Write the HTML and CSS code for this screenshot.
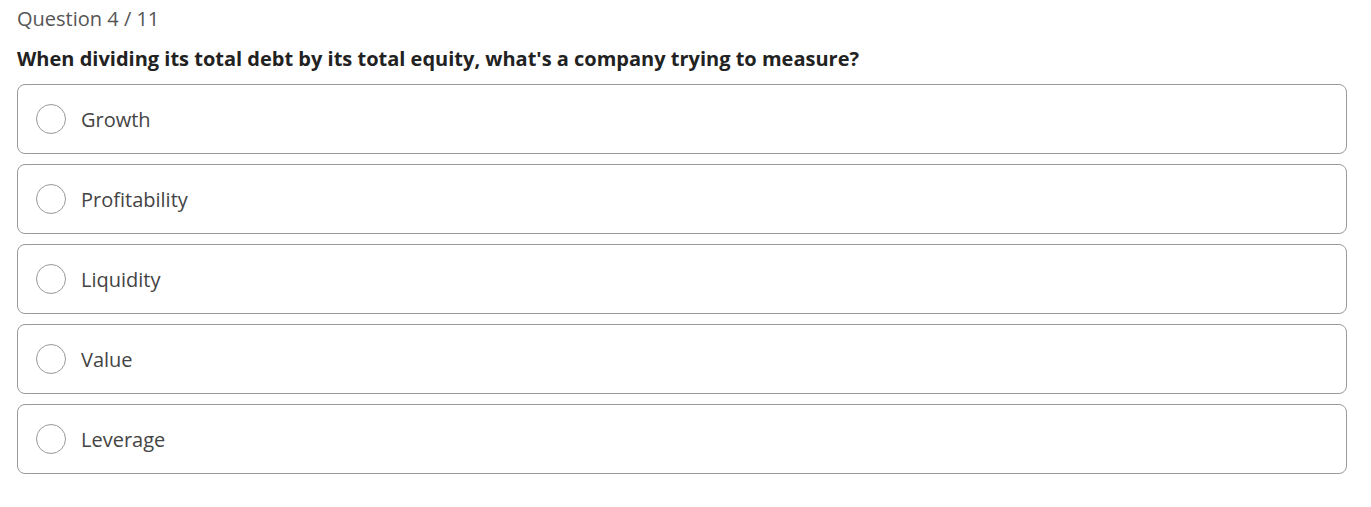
FILE: index.html
```html
<!DOCTYPE html>
<html>
<head>
<meta charset="utf-8">
<link rel="stylesheet" href="styles.css">
</head>
<body>
<div class="quiz">
  <div class="counter">Question 4 / 11</div>
  <div class="question">When dividing its total debt by its total equity, what's a company trying to measure?</div>
  <div class="options">
    <label class="option"><span class="radio"></span><span class="label">Growth</span></label>
    <label class="option"><span class="radio"></span><span class="label">Profitability</span></label>
    <label class="option"><span class="radio"></span><span class="label">Liquidity</span></label>
    <label class="option"><span class="radio"></span><span class="label">Value</span></label>
    <label class="option"><span class="radio"></span><span class="label">Leverage</span></label>
  </div>
</div>
</body>
</html>
```
FILE: styles.css
```css
html, body {
  margin: 0;
  padding: 0;
  background: #fff;
}
body {
  font-family: "Open Sans", "Liberation Sans", sans-serif;
  color: #333;
}
.quiz {
  width: 1330px;
  padding: 6px 0 0 17px;
}
.counter {
  font-size: 20px;
  line-height: 26px;
  color: #555;
}
.question {
  margin-top: 14px;
  font-size: 20px;
  line-height: 26px;
  font-weight: 700;
  color: #222;
}
.options {
  margin-top: 12px;
  display: flex;
  flex-direction: column;
  gap: 10px;
}
.option {
  display: flex;
  align-items: center;
  height: 68px;
  border: 1px solid #999;
  border-radius: 8px;
  padding-left: 18px;
}
.radio {
  width: 28px;
  height: 28px;
  border: 1px solid #999;
  border-radius: 50%;
  box-sizing: content-box;
}
.label {
  margin-left: 15px;
  font-size: 20px;
  color: #444;
}
```
